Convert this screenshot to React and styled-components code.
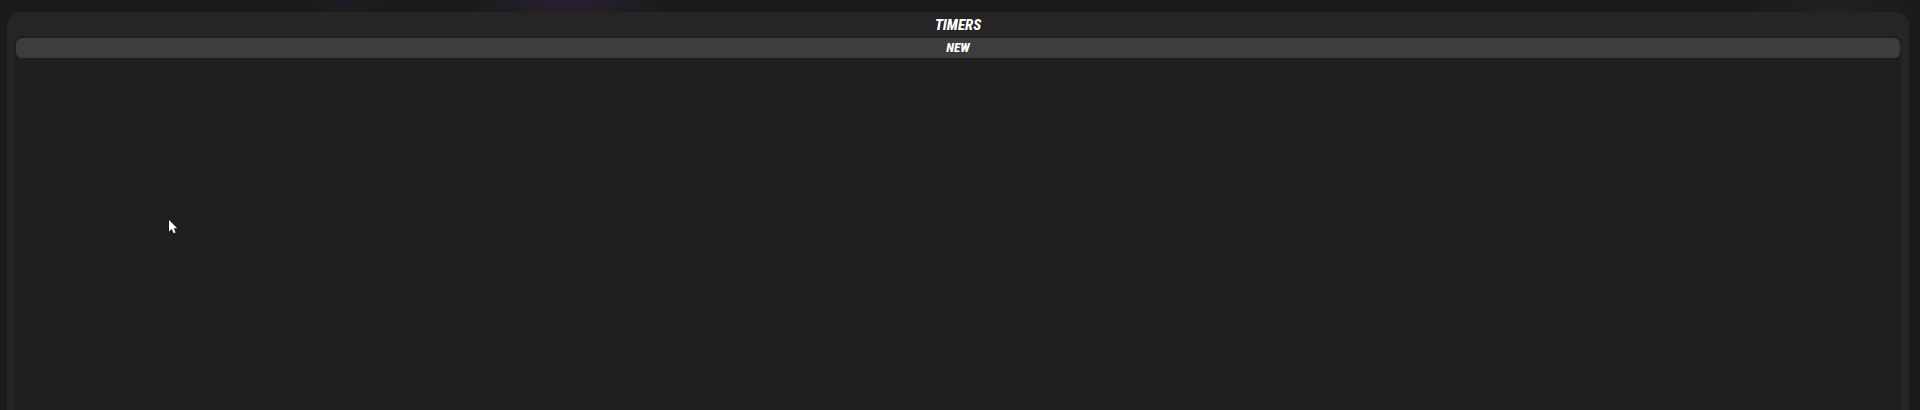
import React from "react";
import styled, { createGlobalStyle } from "styled-components";

const GlobalStyle = createGlobalStyle`
  *, *::before, *::after { box-sizing: border-box; }
  body {
    margin: 0;
    background: #1b1b1b;
    color: #fff;
    font-family: "Roboto Condensed", Roboto, sans-serif;
  }
`;

const Page = styled.main`
  position: relative;
  display: flex;
  min-height: 100vh;
  padding: 12px 11px 0 7px;
  background:
    radial-gradient(ellipse 40px 12px at 18% 0, #211b27, transparent),
    radial-gradient(ellipse 96px 30px at 29.6% 0, #2a2033, transparent),
    radial-gradient(ellipse 80px 40px at 95.5% 12px, #202124, transparent),
    #1b1b1b;
`;

const Panel = styled.section`
  flex: 1;
  display: flex;
  flex-direction: column;
  padding: 0 8px;
  border-radius: 14px 14px 0 0;
  background: #252525;
`;

const Title = styled.h1`
  margin: 0;
  padding-top: 3px;
  font-size: 15px;
  font-style: italic;
  font-weight: 800;
  line-height: 21px;
  text-align: center;
`;

const TimerList = styled.div`
  flex: 1;
  padding: 2px 1px;
  border-radius: 7px 7px 0 0;
  background: #1f1f1f;
`;

const NewButton = styled.button`
  display: block;
  width: 100%;
  height: 20px;
  padding: 0;
  border: 0;
  border-radius: 6px;
  background: #3d3d3d;
  color: #fff;
  font: italic 800 13px/20px "Roboto Condensed", Roboto, sans-serif;
  text-align: center;
  cursor: pointer;
`;

const Pointer = styled.svg`
  position: absolute;
  top: 219px;
  left: 168px;
  pointer-events: none;
`;

export default function App() {
  return (
    <>
      <GlobalStyle />
      <Page>
        <Panel aria-labelledby="timers-title">
          <Title id="timers-title">TIMERS</Title>
          <TimerList>
            <NewButton type="button">NEW</NewButton>
          </TimerList>
        </Panel>
        <Pointer width="12" height="17" viewBox="0 0 12 17" aria-hidden="true">
          <path
            d="M1 1V12.5L3.7 10L5.6 14.3L7.6 13.4L5.8 9.2H9.2Z"
            fill="#fff"
            stroke="#111"
            strokeWidth="1"
            paintOrder="stroke"
          />
        </Pointer>
      </Page>
    </>
  );
}
